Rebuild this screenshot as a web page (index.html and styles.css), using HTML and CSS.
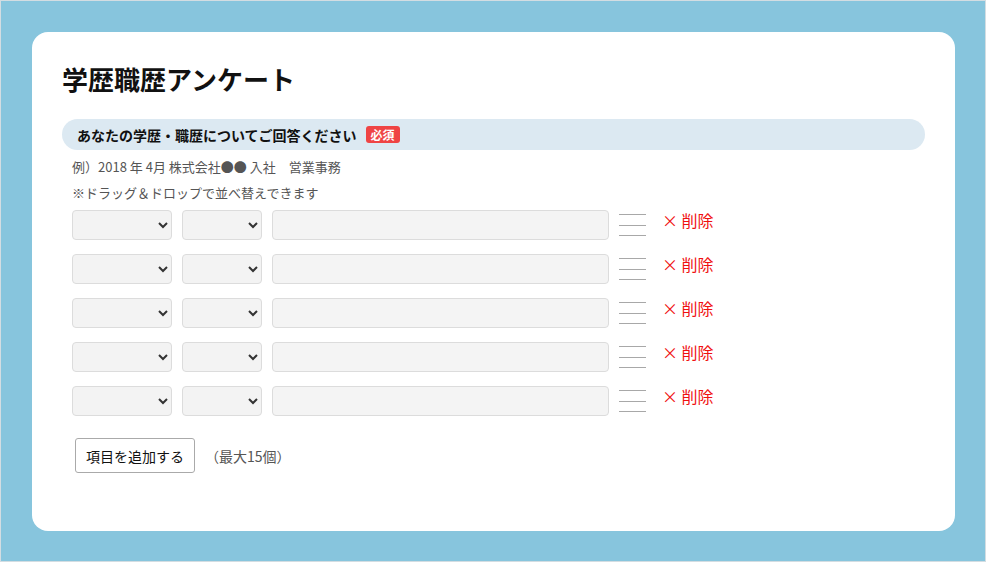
FILE: index.html
```html
<!DOCTYPE html>
<html lang="ja">
<head>
<meta charset="utf-8">
<title>学歴職歴アンケート</title>
<link rel="stylesheet" href="styles.css">
</head>
<body>
<div class="card">
  <h1 class="title">学歴職歴アンケート</h1>
  <div class="qbar"><span class="qtext">あなたの学歴・職歴についてご回答ください</span><span class="badge">必須</span></div>
  <div class="content">
    <p class="note">例）2018 年 4月 株式会社●● 入社　営業事務</p>
    <p class="note">※ドラッグ＆ドロップで並べ替えできます</p>
    <div class="rows">
      <div class="row">
        <select class="sel sel-year"><option></option></select>
        <select class="sel sel-month"><option></option></select>
        <input class="txt" type="text">
        <span class="handle"><i></i><i></i><i></i></span>
        <span class="del">× 削除</span>
      </div>
      <div class="row">
        <select class="sel sel-year"><option></option></select>
        <select class="sel sel-month"><option></option></select>
        <input class="txt" type="text">
        <span class="handle"><i></i><i></i><i></i></span>
        <span class="del">× 削除</span>
      </div>
      <div class="row">
        <select class="sel sel-year"><option></option></select>
        <select class="sel sel-month"><option></option></select>
        <input class="txt" type="text">
        <span class="handle"><i></i><i></i><i></i></span>
        <span class="del">× 削除</span>
      </div>
      <div class="row">
        <select class="sel sel-year"><option></option></select>
        <select class="sel sel-month"><option></option></select>
        <input class="txt" type="text">
        <span class="handle"><i></i><i></i><i></i></span>
        <span class="del">× 削除</span>
      </div>
      <div class="row">
        <select class="sel sel-year"><option></option></select>
        <select class="sel sel-month"><option></option></select>
        <input class="txt" type="text">
        <span class="handle"><i></i><i></i><i></i></span>
        <span class="del">× 削除</span>
      </div>
    </div>
    <div class="addline">
      <button class="addbtn" type="button">項目を追加する</button>
      <span class="max">（最大15個）</span>
    </div>
  </div>
</div>
</body>
</html>
```
FILE: styles.css
```css
* { box-sizing: border-box; }
html, body { margin: 0; padding: 0; }
body {
  width: 986px;
  height: 562px;
  background: #87c5dd;
  border: 1px solid #d3dde2;
  padding: 31px 30px 30px 31px;
  font-family: "Noto Sans CJK JP", "Noto Sans", sans-serif;
  color: #111;
}
.card {
  background: #fff;
  border-radius: 16px;
  height: 499px;
  width: 923px;
  padding: 28px 30px 0 30px;
}
.title {
  margin: 0;
  font-size: 26px;
  line-height: 38px;
  font-weight: 700;
  color: #111;
  padding-left: 0;
}
.qbar {
  margin-top: 21px;
  height: 31px;
  background: #dce9f2;
  border-radius: 16px;
  display: flex;
  align-items: center;
  padding-left: 15px;
}
.qtext {
  font-size: 14px;
  font-weight: 700;
  color: #111;
}
.badge {
  margin-left: 9px;
  background: #ef4444;
  color: #fff;
  font-size: 12px;
  font-weight: 700;
  line-height: 17px;
  padding: 0 5px;
  border-radius: 3px;
}
.content {
  padding-left: 10px;
  padding-top: 4px;
}
.note {
  margin: 0;
  font-size: 13px;
  line-height: 26px;
  color: #555;
}
.rows {
  margin-top: 4px;
  display: flex;
  flex-direction: column;
  gap: 14px;
}
.row {
  display: flex;
  align-items: center;
  height: 30px;
}
.sel {
  height: 30px;
  background: #f3f3f3;
  border: 1px solid #dcdcdc;
  border-radius: 4px;
  font-family: inherit;
  font-size: 14px;
  color: #333;
  margin-right: 10px;
}
.sel-year { width: 100px; }
.sel-month { width: 80px; }
.txt {
  width: 337px;
  height: 30px;
  background: #f4f4f4;
  border: 1px solid #dcdcdc;
  border-radius: 4px;
  margin: 0 10px 0 0;
  font-family: inherit;
}
.handle {
  width: 27px;
  height: 22px;
  display: flex;
  flex-direction: column;
  justify-content: space-between;
  margin-right: 16px;
}
.handle i {
  display: block;
  height: 1px;
  background: #a8a8a8;
}
.del {
  align-self: flex-start;
  color: #f01010;
  font-size: 16px;
  line-height: 21px;
  white-space: pre;
}
.addline {
  margin-top: 22px;
  display: flex;
  align-items: center;
  padding-left: 3px;
}
.addbtn {
  width: 120px;
  height: 35px;
  background: #fff;
  border: 1px solid #aaa;
  border-radius: 3px;
  font-family: inherit;
  font-size: 14px;
  color: #111;
  padding: 0;
}
.max {
  margin-left: 10px;
  font-size: 14px;
  color: #555;
}
```
